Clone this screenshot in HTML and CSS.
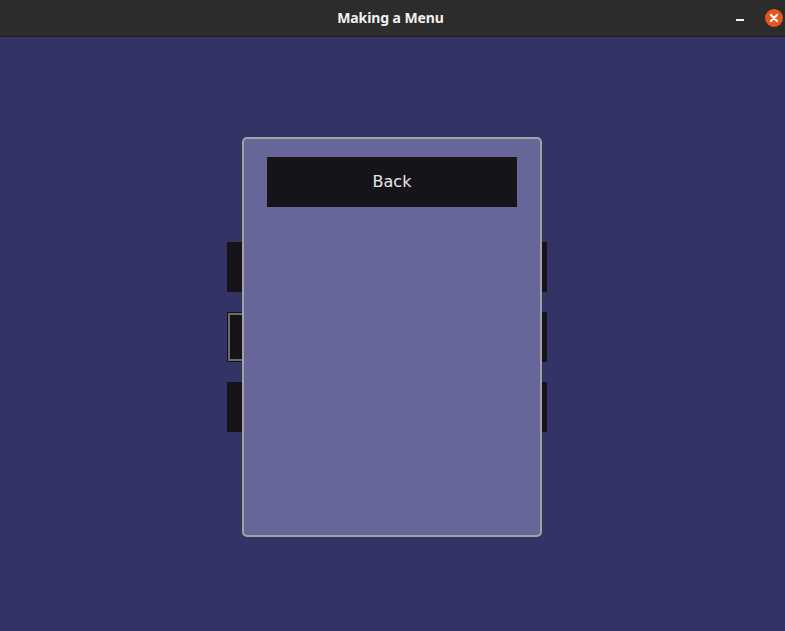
FILE: index.html
```html
<!DOCTYPE html>
<html lang="en">
<head>
    <meta charset="UTF-8">
    <title>Making a Menu</title>
    <link rel="stylesheet" href="styles.css">
</head>
<body>
    <div class="titlebar">
        <div class="title">Making a Menu</div>
        <div class="controls">
            <span class="minimize"></span>
            <span class="close">
                <svg width="18" height="18" viewBox="0 0 18 18">
                    <circle cx="9" cy="9" r="9" fill="#e95420"/>
                    <path d="M6 6 L12 12 M12 6 L6 12" stroke="#fff" stroke-width="2.2" stroke-linecap="round"/>
                </svg>
            </span>
        </div>
    </div>
    <div class="stage">
        <div class="menu">
            <div class="btn"></div>
            <div class="btn focus"></div>
            <div class="btn"></div>
        </div>
        <div class="panel">
            <div class="back">Back</div>
        </div>
    </div>
</body>
</html>
```

FILE: styles.css
```css
* {
    margin: 0;
    padding: 0;
    box-sizing: border-box;
}
body {
    width: 785px;
    height: 631px;
    overflow: hidden;
    background-color: #333366;
    font-family: "DejaVu Sans", sans-serif;
}
.titlebar {
    position: relative;
    height: 37px;
    background-color: #2c2c2c;
    border-bottom: 1px solid #1e1e1e;
    display: flex;
    align-items: center;
    justify-content: center;
}
.title {
    color: #f2f2f2;
    font-family: "Noto Sans", sans-serif;
    font-weight: bold;
    font-size: 14px;
    letter-spacing: -0.1px;
    margin-right: 4px;
    margin-top: -1px;
}
.controls {
    position: absolute;
    right: 2px;
    top: 9px;
    display: flex;
    align-items: center;
}
.minimize {
    width: 8px;
    height: 2px;
    background-color: #f2f2f2;
    margin-right: 21px;
    margin-top: 4px;
}
.close {
    display: flex;
}
.stage {
    position: relative;
    height: 594px;
}
.menu {
    display: flex;
    flex-direction: column;
    gap: 20px;
    padding: 205px 0 0 227px;
}
.btn {
    width: 320px;
    height: 50px;
    background-color: #161418;
}
/* focus frame, only its left end shows past the panel */
.btn.focus {
    position: relative;
}
.btn.focus::before {
    content: "";
    position: absolute;
    left: 1px;
    top: 1px;
    bottom: 1px;
    width: 300px;
    border: 2px solid #6c6c70;
    border-right: none;
}
.panel {
    position: absolute;
    left: 242px;
    top: 100px;
    width: 300px;
    height: 400px;
    background-color: #666699;
    border: 2px solid #a2a2a6;
    border-radius: 5px;
    padding-top: 18px;
}
.back {
    width: 250px;
    height: 50px;
    margin: 0 auto;
    padding-bottom: 2px;
    background-color: #161418;
    color: #e8e8ec;
    font-size: 16px;
    display: flex;
    align-items: center;
    justify-content: center;
}
```
